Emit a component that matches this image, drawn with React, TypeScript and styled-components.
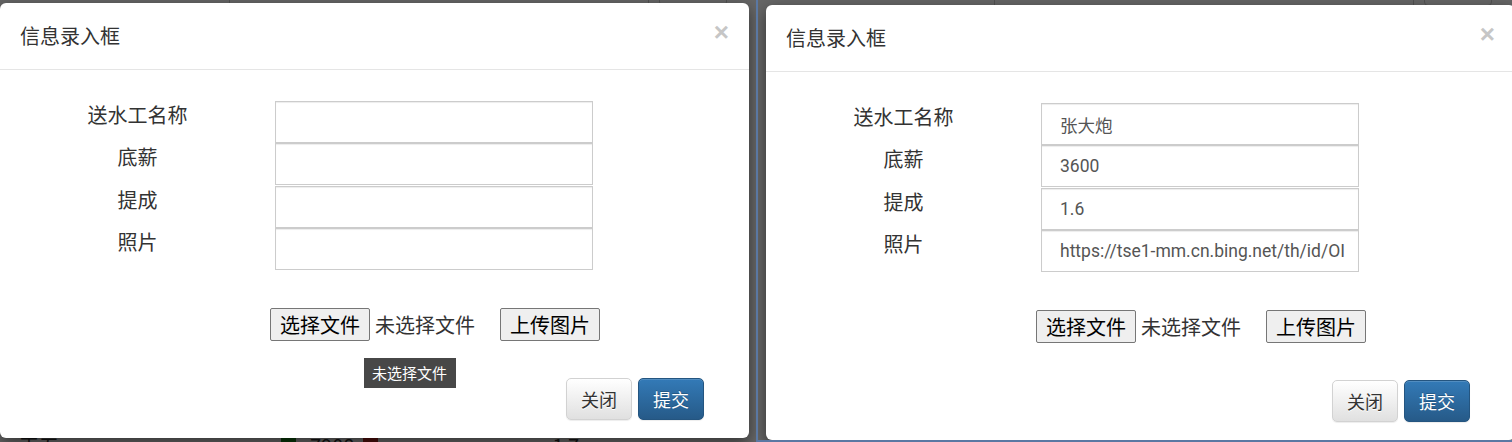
import React from "react";
import styled, { createGlobalStyle } from "styled-components";

const GlobalStyle = createGlobalStyle`
  html, body { margin: 0; padding: 0; }
  body {
    width: 1512px;
    height: 442px;
    overflow: hidden;
    background: #5a78a3;
    font-family: "Noto Sans CJK SC", "Noto Sans", sans-serif;
  }
  * { box-sizing: border-box; }
`;

const Stage = styled.div`
  display: flex;
  align-items: flex-start;
  gap: 2px;
  width: 1512px;
  height: 442px;
  background: #5a78a3;
`;

const Screen = styled.div<{ $w: number; $h: number }>`
  position: relative;
  flex: none;
  width: ${(p) => p.$w}px;
  height: ${(p) => p.$h}px;
  overflow: hidden;
  background: #fff;
`;

/* ---------- page behind the backdrop ---------- */
const PageBehind = styled.div`
  display: flex;
  flex-direction: column;
  justify-content: space-between;
  height: 100%;
`;

const TopBar = styled.div<{ $pad: number }>`
  display: flex;
  align-items: flex-end;
  height: 6px;
  overflow: hidden;
  padding-left: ${(p) => p.$pad}px;
`;

const SearchBox = styled.div`
  display: flex;
  align-items: center;
  flex: none;
  width: 420px;
  height: 34px;
  padding-left: 18px;
  border: 1px solid #ccc;
  font-size: 20px;
  color: #555;
`;

const SearchButton = styled.div`
  flex: none;
  width: 68px;
  height: 34px;
  margin-left: 10px;
  border: 1px solid #ccc;
  border-radius: 4px;
  font-size: 20px;
  text-align: center;
  color: #333;
`;

const BottomRow = styled.div`
  display: flex;
  align-items: flex-start;
  height: 6px;
  overflow: hidden;
  font-size: 20px;
  line-height: 20px;
  color: #333;
`;

const Cell = styled.span<{ $x: number }>`
  margin-left: ${(p) => p.$x}px;
`;

const Swatch = styled.span<{ $c: string; $x: number }>`
  display: inline-block;
  width: 15px;
  height: 20px;
  margin-left: ${(p) => p.$x}px;
  background: ${(p) => p.$c};
`;

/* ---------- backdrop + modal ---------- */
const Backdrop = styled.div<{ $top: number; $left: number }>`
  position: absolute;
  inset: 0;
  background: rgba(0, 0, 0, 0.6);
  padding-top: ${(p) => p.$top}px;
  padding-left: ${(p) => p.$left}px;
`;

const Modal = styled.div`
  width: 749px;
  background: #fff;
  border-radius: 6px;
  box-shadow: 0 5px 15px rgba(0, 0, 0, 0.5);
  display: flex;
  flex-direction: column;
`;

const Header = styled.div`
  display: flex;
  justify-content: space-between;
  align-items: flex-start;
  padding: 19px 19px 19px 20px;
  border-bottom: 1px solid #e5e5e5;
`;

const Title = styled.h4`
  margin: 0;
  font-size: 20px;
  line-height: 28px;
  font-weight: normal;
  color: #333;
`;

const Close = styled.span`
  font-family: "Liberation Sans", Arial, sans-serif;
  font-size: 26px;
  font-weight: bold;
  line-height: 20px;
  margin-top: 0;
  margin-right: 1px;
  color: #c6c6c6;
`;

const Body = styled.div`
  padding-top: 31px;
`;

const FormGrid = styled.div`
  display: grid;
  grid-template-columns: 275px 318px;
  grid-auto-rows: 42.3px;
`;

const Label = styled.div`
  align-self: start;
  text-align: center;
  font-size: 20px;
  line-height: 28px;
  color: #333;
`;

const Field = styled.input`
  width: 318px;
  height: 42px;
  margin: 0;
  padding: 0 12px 0 18px;
  border: 1px solid #ccc;
  border-radius: 0;
  background: #fff;
  box-shadow: inset 0 1px 1px rgba(0, 0, 0, 0.075);
  font-family: Roboto, "Noto Sans CJK SC", sans-serif;
  font-size: 17.5px;
  color: #555;
  outline: none;
`;

const FileRow = styled.div`
  position: relative;
  display: flex;
  align-items: center;
  margin-top: 38px;
  padding-left: 270px;
`;

const NativeButton = styled.button<{ $gap?: number }>`
  height: 33px;
  margin: 0 0 0 ${(p) => p.$gap ?? 0}px;
  padding: 0 9px;
  border: 1px solid #767676;
  border-radius: 2px;
  background: #efefef;
  font-family: "Noto Sans CJK SC", sans-serif;
  font-size: 20px;
  line-height: 31px;
  color: #000;
`;

const FileStatus = styled.span`
  margin-left: 5px;
  font-size: 20px;
  line-height: 31px;
  color: #333;
`;

const Tooltip = styled.div`
  position: absolute;
  left: 364px;
  top: 50px;
  width: 92px;
  height: 30px;
  padding-left: 8px;
  background: #474747;
  color: #fff;
  font-size: 15px;
  line-height: 30px;
  white-space: nowrap;
`;

const Footer = styled.div`
  display: flex;
  justify-content: flex-end;
  gap: 6px;
  margin-top: 37px;
  padding: 0 45px 18px 0;
`;

const FooterButton = styled.button<{ $primary?: boolean }>`
  height: 42px;
  margin: 0;
  padding: 0 14px;
  border-radius: 5px;
  font-family: "Noto Sans CJK SC", sans-serif;
  font-size: 18px;
  line-height: 40px;
  border: 1px solid ${(p) => (p.$primary ? "#245580" : "#d2d2d2")};
  background: ${(p) =>
    p.$primary
      ? "linear-gradient(to bottom, #337ab7 0%, #265a88 100%)"
      : "linear-gradient(to bottom, #fff 0%, #e0e0e0 100%)"};
  color: ${(p) => (p.$primary ? "#fff" : "#333")};
  text-shadow: ${(p) =>
    p.$primary ? "0 -1px 0 rgba(0,0,0,.2)" : "0 1px 0 #fff"};
  box-shadow: inset 0 1px 0 rgba(255, 255, 255, 0.15),
    0 1px 1px rgba(0, 0, 0, 0.075);
`;

type Values = { name: string; base: string; rate: string; photo: string };

const labels = ["送水工名称", "底薪", "提成", "照片"];

function EntryModal({ values, tooltip }: { values: Values; tooltip: boolean }) {
  const vals = [values.name, values.base, values.rate, values.photo];
  return (
    <Modal>
      <Header>
        <Title>信息录入框</Title>
        <Close>×</Close>
      </Header>
      <Body>
        <FormGrid>
          {labels.map((l, i) => (
            <React.Fragment key={l}>
              <Label>{l}</Label>
              <Field readOnly value={vals[i]} />
            </React.Fragment>
          ))}
        </FormGrid>
        <FileRow>
          <NativeButton>选择文件</NativeButton>
          <FileStatus>未选择文件</FileStatus>
          <NativeButton $gap={25}>上传图片</NativeButton>
          {tooltip && <Tooltip>未选择文件</Tooltip>}
        </FileRow>
      </Body>
      <Footer>
        <FooterButton>关闭</FooterButton>
        <FooterButton $primary>提交</FooterButton>
      </Footer>
    </Modal>
  );
}

function ModalScreen({
  width,
  height,
  top,
  left,
  barPad,
  values,
  tooltip,
  showRow,
}: {
  width: number;
  height: number;
  top: number;
  left: number;
  barPad: number;
  values: Values;
  tooltip: boolean;
  showRow: boolean;
}) {
  return (
    <Screen $w={width} $h={height}>
      <PageBehind>
        <TopBar $pad={barPad}>
          <SearchBox>请输入用户名</SearchBox>
          <SearchButton>搜索</SearchButton>
        </TopBar>
        {showRow ? (
          <BottomRow>
            <Cell $x={19}>王五</Cell>
            <Swatch $c="#1a8a1a" $x={222} />
            <Cell $x={14}>7908</Cell>
            <Swatch $c="#c0241c" $x={9} />
            <Cell $x={174}>1 7</Cell>
          </BottomRow>
        ) : (
          <BottomRow />
        )}
      </PageBehind>
      <Backdrop $top={top} $left={left}>
        <EntryModal values={values} tooltip={tooltip} />
      </Backdrop>
    </Screen>
  );
}

export default function App() {
  return (
    <>
      <GlobalStyle />
      <Stage>
        <ModalScreen
          width={756}
          height={442}
          top={3}
          left={0}
          barPad={229}
          values={{ name: "", base: "", rate: "", photo: "" }}
          tooltip
          showRow
        />
        <ModalScreen
          width={754}
          height={440}
          top={5}
          left={8}
          barPad={236}
          values={{
            name: "张大炮",
            base: "3600",
            rate: "1.6",
            photo: "https://tse1-mm.cn.bing.net/th/id/OI",
          }}
          tooltip={false}
          showRow={false}
        />
      </Stage>
    </>
  );
}
